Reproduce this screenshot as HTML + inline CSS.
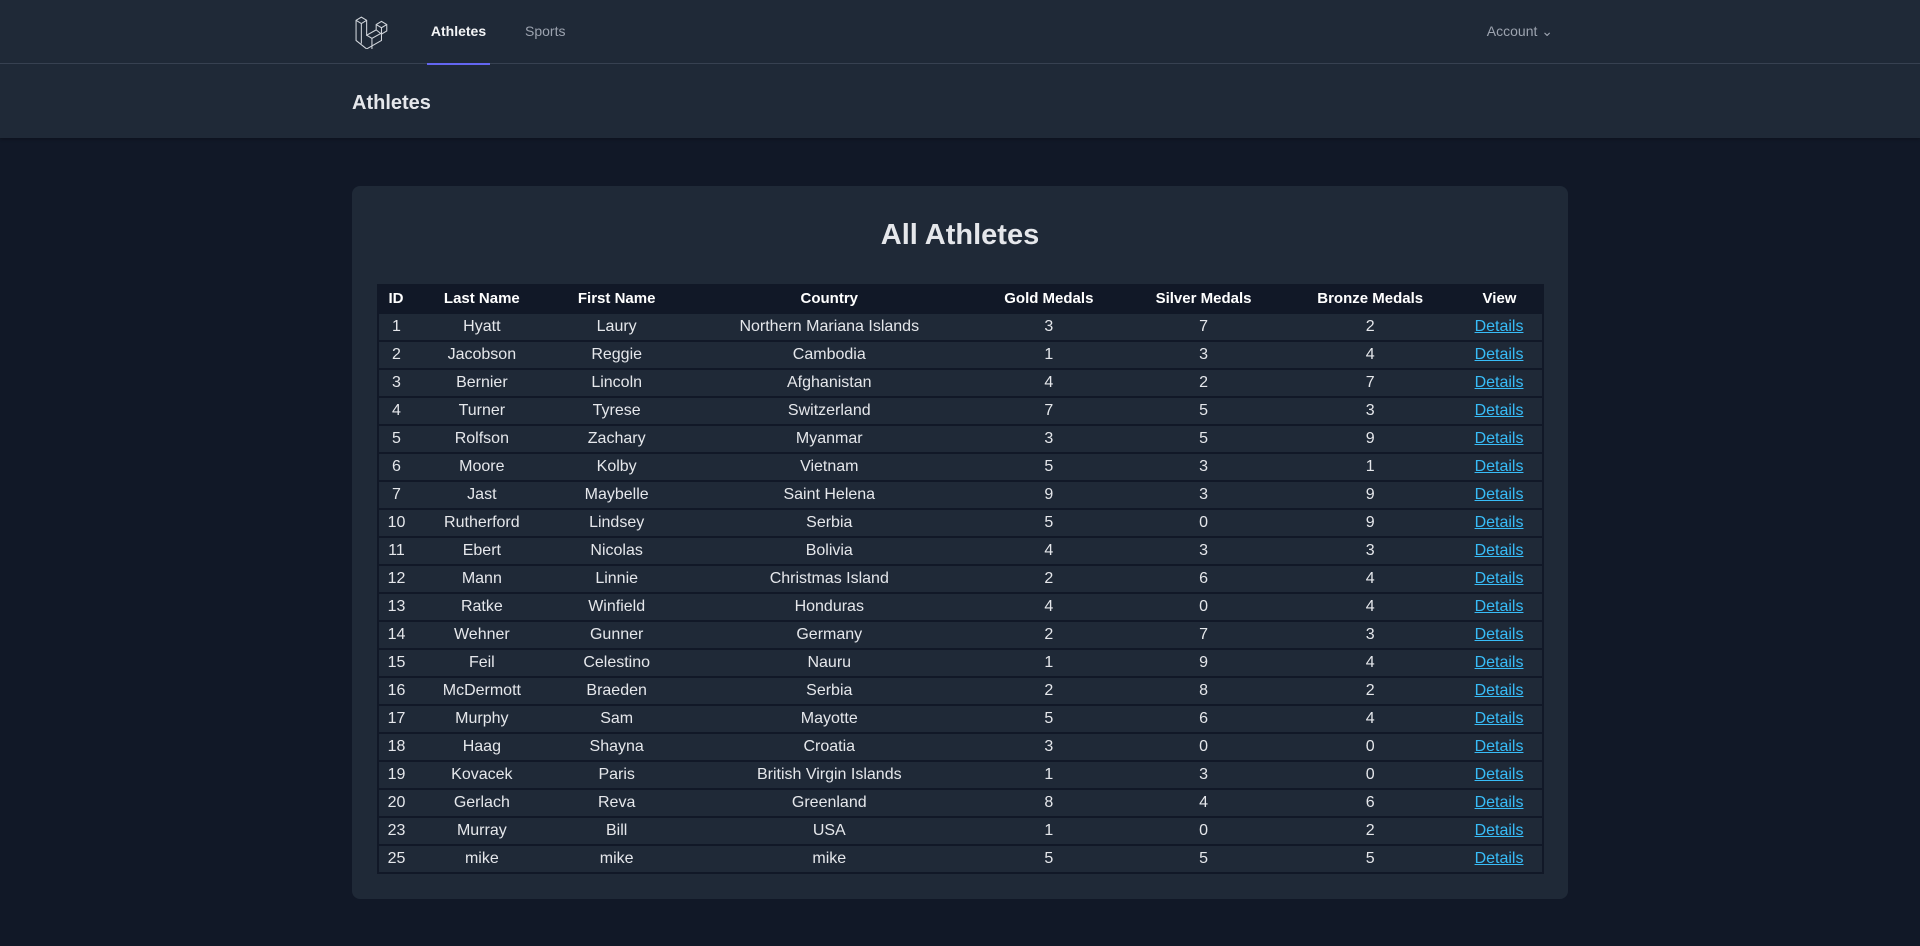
<!DOCTYPE html>
<html><head><meta charset="utf-8"><style>
*{box-sizing:border-box;margin:0;padding:0}
body{width:1920px;height:946px;background:#111827;font-family:"Liberation Sans",sans-serif;color:#e5e7eb;overflow:hidden}
nav{height:64px;background:#1f2937;border-bottom:1px solid #374151;position:relative}
.logo{position:absolute;left:355px;top:15px}
.nl{position:absolute;top:0;height:64px;line-height:63px;font-size:14px}
.a1{left:427px;width:63px;text-align:center;color:#f3f4f6;font-weight:bold}
.a1:after{content:"";position:absolute;left:0;right:0;bottom:-1px;height:2px;background:#6366f1}
.a2{left:525px;color:#9ca3af}
.acc{right:367px;color:#9ca3af}
header{height:74px;background:#1f2937;box-shadow:0 1px 3px rgba(0,0,0,.3)}
header h2{padding-left:352px;padding-top:2px;line-height:74px;font-size:20px;font-weight:bold;color:#e5e7eb}
.card{position:absolute;left:352px;top:186px;width:1216px;height:713px;background:#1f2937;border-radius:8px}
h1{text-align:center;font-size:29px;font-weight:bold;margin-top:33px;height:52px;color:#e5e7eb}
table{position:absolute;left:25px;top:98px;width:1167px;border-collapse:collapse;background:#111827;font-size:16px;text-align:center}
th{height:29px;font-weight:bold;color:#fff;font-size:15px}
td{height:28px;background:#1f2937;border:2px solid #111827;border-left:none;border-right:none;color:#e5e7eb}
td:first-child{border-left:2px solid #111827}td:last-child{border-right:2px solid #111827}
a{color:#38bdf8;text-decoration:underline}
</style></head><body>
<nav>
<svg class="logo" width="36" height="34" viewBox="0 0 34 32" fill="none" stroke="#d1d5db" stroke-width="1"><path d="M1 5l5-3 5 3v14l9-5V9l5-3 5 3v6l-5 3v6l-14 8L1 24z M1 5l5 3 5-3 M6 8v19 M20 9l5 3 5-3 M25 12v6 M20 14l5 4 M11 19l5 3 9-5 M16 22v10"/></svg>
<div class="nl a1">Athletes</div>
<div class="nl a2">Sports</div>
<div class="nl acc">Account &#8964;</div>
</nav>
<header><h2>Athletes</h2></header>
<div class="card">
<h1>All Athletes</h1>
<table>
<colgroup><col style="width:36px"><col style="width:136px"><col style="width:134px"><col style="width:292px"><col style="width:148px"><col style="width:162px"><col style="width:172px"><col style="width:87px"></colgroup>
<tr><th>ID</th><th>Last Name</th><th>First Name</th><th>Country</th><th>Gold Medals</th><th>Silver Medals</th><th>Bronze Medals</th><th>View</th></tr>
<tr><td>1</td><td>Hyatt</td><td>Laury</td><td>Northern Mariana Islands</td><td>3</td><td>7</td><td>2</td><td><a>Details</a></td></tr>
<tr><td>2</td><td>Jacobson</td><td>Reggie</td><td>Cambodia</td><td>1</td><td>3</td><td>4</td><td><a>Details</a></td></tr>
<tr><td>3</td><td>Bernier</td><td>Lincoln</td><td>Afghanistan</td><td>4</td><td>2</td><td>7</td><td><a>Details</a></td></tr>
<tr><td>4</td><td>Turner</td><td>Tyrese</td><td>Switzerland</td><td>7</td><td>5</td><td>3</td><td><a>Details</a></td></tr>
<tr><td>5</td><td>Rolfson</td><td>Zachary</td><td>Myanmar</td><td>3</td><td>5</td><td>9</td><td><a>Details</a></td></tr>
<tr><td>6</td><td>Moore</td><td>Kolby</td><td>Vietnam</td><td>5</td><td>3</td><td>1</td><td><a>Details</a></td></tr>
<tr><td>7</td><td>Jast</td><td>Maybelle</td><td>Saint Helena</td><td>9</td><td>3</td><td>9</td><td><a>Details</a></td></tr>
<tr><td>10</td><td>Rutherford</td><td>Lindsey</td><td>Serbia</td><td>5</td><td>0</td><td>9</td><td><a>Details</a></td></tr>
<tr><td>11</td><td>Ebert</td><td>Nicolas</td><td>Bolivia</td><td>4</td><td>3</td><td>3</td><td><a>Details</a></td></tr>
<tr><td>12</td><td>Mann</td><td>Linnie</td><td>Christmas Island</td><td>2</td><td>6</td><td>4</td><td><a>Details</a></td></tr>
<tr><td>13</td><td>Ratke</td><td>Winfield</td><td>Honduras</td><td>4</td><td>0</td><td>4</td><td><a>Details</a></td></tr>
<tr><td>14</td><td>Wehner</td><td>Gunner</td><td>Germany</td><td>2</td><td>7</td><td>3</td><td><a>Details</a></td></tr>
<tr><td>15</td><td>Feil</td><td>Celestino</td><td>Nauru</td><td>1</td><td>9</td><td>4</td><td><a>Details</a></td></tr>
<tr><td>16</td><td>McDermott</td><td>Braeden</td><td>Serbia</td><td>2</td><td>8</td><td>2</td><td><a>Details</a></td></tr>
<tr><td>17</td><td>Murphy</td><td>Sam</td><td>Mayotte</td><td>5</td><td>6</td><td>4</td><td><a>Details</a></td></tr>
<tr><td>18</td><td>Haag</td><td>Shayna</td><td>Croatia</td><td>3</td><td>0</td><td>0</td><td><a>Details</a></td></tr>
<tr><td>19</td><td>Kovacek</td><td>Paris</td><td>British Virgin Islands</td><td>1</td><td>3</td><td>0</td><td><a>Details</a></td></tr>
<tr><td>20</td><td>Gerlach</td><td>Reva</td><td>Greenland</td><td>8</td><td>4</td><td>6</td><td><a>Details</a></td></tr>
<tr><td>23</td><td>Murray</td><td>Bill</td><td>USA</td><td>1</td><td>0</td><td>2</td><td><a>Details</a></td></tr>
<tr><td>25</td><td>mike</td><td>mike</td><td>mike</td><td>5</td><td>5</td><td>5</td><td><a>Details</a></td></tr>
</table>
</div>
</body></html>
